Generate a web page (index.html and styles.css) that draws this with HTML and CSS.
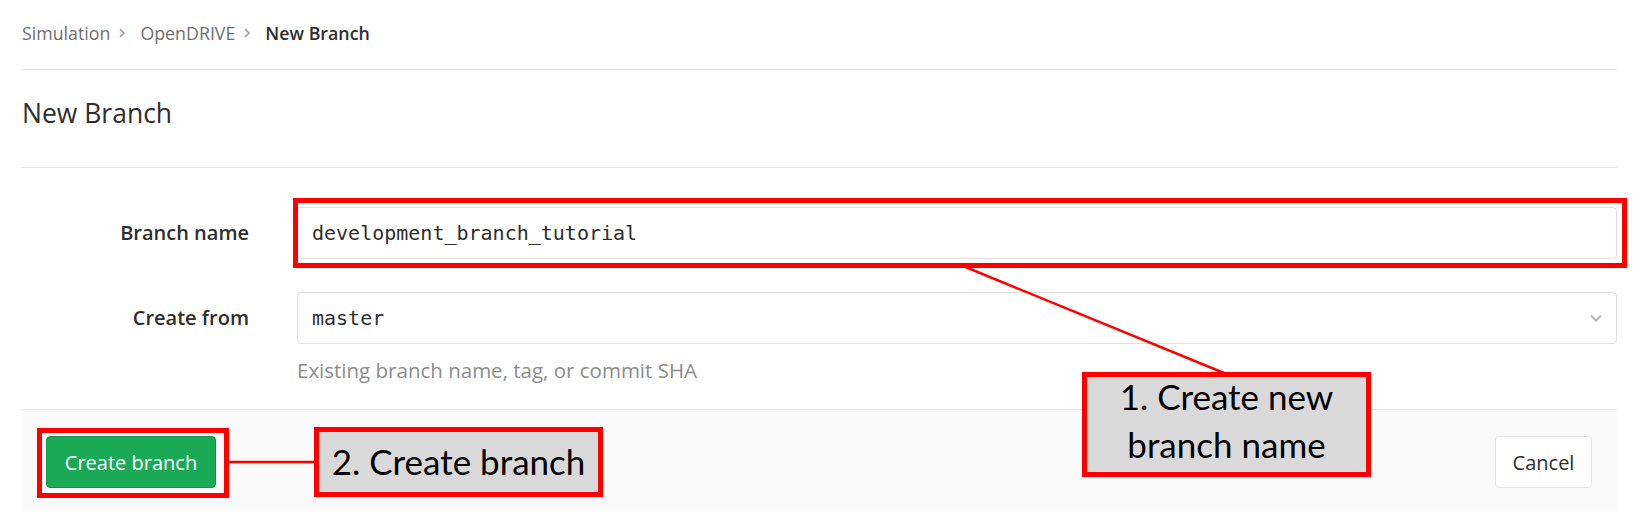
FILE: index.html
```html
<!DOCTYPE html>
<html lang="en">
<head>
<meta charset="utf-8">
<title>New Branch</title>
<link rel="stylesheet" href="styles.css">
</head>
<body>
<div class="page">
  <nav class="breadcrumbs">
    <a class="crumb" href="#">Simulation</a>
    <svg class="chev" viewBox="0 0 8 12" width="8" height="12"><path d="M2 2 L6 6 L2 10" fill="none" stroke="#9a9a9a" stroke-width="1.5"/></svg>
    <a class="crumb" href="#">OpenDRIVE</a>
    <svg class="chev" viewBox="0 0 8 12" width="8" height="12"><path d="M2 2 L6 6 L2 10" fill="none" stroke="#9a9a9a" stroke-width="1.5"/></svg>
    <span class="crumb current">New Branch</span>
  </nav>

  <h1 class="title">New Branch</h1>

  <form class="form">
    <div class="row">
      <label class="label" for="bn">Branch name</label>
      <div class="field">
        <input id="bn" class="input mono" type="text" value="development_branch_tutorial">
      </div>
    </div>
    <div class="row">
      <label class="label">Create from</label>
      <div class="field">
        <div class="select">
          <span class="mono">master</span>
          <svg class="select-chev" viewBox="0 0 14 10" width="14" height="10"><path d="M2 2.5 L7 7.5 L12 2.5" fill="none" stroke="#b5b5b5" stroke-width="2"/></svg>
        </div>
        <p class="help">Existing branch name, tag, or commit SHA</p>
      </div>
    </div>
  </form>

  <div class="footer">
    <button class="btn btn-success" type="button">Create branch</button>
    <button class="btn btn-cancel" type="button">Cancel</button>
  </div>

  <!-- annotation overlay -->
  <svg class="ann-lines" width="1639" height="511" viewBox="0 0 1639 511">
    <line x1="963" y1="266" x2="1224" y2="373" stroke="#ff0000" stroke-width="2.5"/>
    <line x1="228" y1="462" x2="316" y2="462" stroke="#ff0000" stroke-width="2.5"/>
  </svg>
  <div class="ann-box ann-box-1"></div>
  <div class="ann-box ann-box-2"></div>
  <div class="callout callout-1">1. Create new<br>branch name</div>
  <div class="callout callout-2">2. Create branch</div>
</div>
</body>
</html>
```

FILE: styles.css
```css
* { box-sizing: border-box; }
html, body { margin: 0; padding: 0; background: #fff; }
body {
  font-family: "Open Sans", "Noto Sans", sans-serif;
  color: #2e2e2e;
  width: 1639px;
  height: 511px;
  overflow: hidden;
}
.page {
  position: relative;
  padding: 0 22px;
  height: 511px;
  display: flex;
  flex-direction: column;
}
.breadcrumbs {
  flex: none;
  height: 70px;
  border-bottom: 1px solid #e5e5e5;
  display: flex;
  align-items: center;
  padding-bottom: 4px;
  font-size: 17.8px;
}
.crumb { color: #707070; text-decoration: none; }
.crumb.current { color: #2e2e2e; font-weight: 600; }
.chev { margin: 1px 14px 0 8px; }

.title {
  flex: none;
  margin: 0;
  height: 98px;
  border-bottom: 1px solid #e5e5e5;
  font-size: 26.5px;
  font-weight: 400;
  color: #2e2e2e;
  display: flex;
  align-items: center;
  padding-bottom: 12px;
}

.form {
  flex: none;
  padding-top: 39px;
  display: flex;
  flex-direction: column;
  gap: 33px;
}
.row {
  display: grid;
  grid-template-columns: 227px 1fr;
  column-gap: 48px;
  align-items: start;
}
.label {
  text-align: right;
  font-weight: 600;
  font-size: 20px;
  line-height: 52px;
  color: #2e2e2e;
}
.mono { font-family: "DejaVu Sans Mono", "Liberation Mono", monospace; font-size: 20px; color: #2e2e2e; }
.input {
  display: block;
  width: 100%;
  height: 52px;
  border: 1px solid #dfdfdf;
  border-radius: 4px;
  padding: 0 14px;
  background: #fff;
  outline: none;
}
.select {
  height: 52px;
  border: 1px solid #dfdfdf;
  border-radius: 4px;
  padding: 0 13px 0 14px;
  display: flex;
  align-items: center;
  justify-content: space-between;
  background: #fff;
}
.help {
  margin: 14px 0 0;
  font-size: 20.5px;
  line-height: 24px;
  color: #8c8c8c;
}

.footer {
  flex: 1;
  margin-top: 27px;
  background: #fafafa;
  border-top: 1px solid #e5e5e5;
  display: flex;
  justify-content: space-between;
  align-items: flex-start;
  padding: 26px 25px 0 24px;
}
.btn {
  font-family: "Open Sans", "Noto Sans", sans-serif;
  font-size: 20px;
  height: 52px;
  border-radius: 4px;
  padding: 0 16px;
  cursor: pointer;
  white-space: nowrap;
}
.btn-success {
  background: #1aaa55;
  border: 1px solid #168f48;
  color: #fff;
  width: 170px;
}
.btn-cancel {
  background: #fff;
  border: 1px solid #e5e5e5;
  color: #2e2e2e;
  width: 97px;
}

/* annotations */
.ann-lines { position: absolute; left: 0; top: 0; pointer-events: none; }
.ann-box {
  position: absolute;
  border: 5px solid #ff0000;
  pointer-events: none;
}
.ann-box-1 { left: 293px; top: 198px; width: 1334px; height: 70px; }
.ann-box-2 { left: 37px; top: 428px; width: 192px; height: 70px; }
.callout {
  position: absolute;
  background: #d9d9d9;
  border: 5px solid #ff0000;
  color: #000;
  font-family: Lato, "Open Sans", sans-serif;
  font-size: 35px;
  text-align: center;
  display: flex;
  align-items: center;
  justify-content: center;
}
.callout-1 { left: 1082px; top: 372px; width: 289px; height: 105px; line-height: 48px; padding-bottom: 10px; }
.callout-2 { left: 314px; top: 427px; width: 289px; height: 70px; line-height: 1; padding-bottom: 2px; }
```
